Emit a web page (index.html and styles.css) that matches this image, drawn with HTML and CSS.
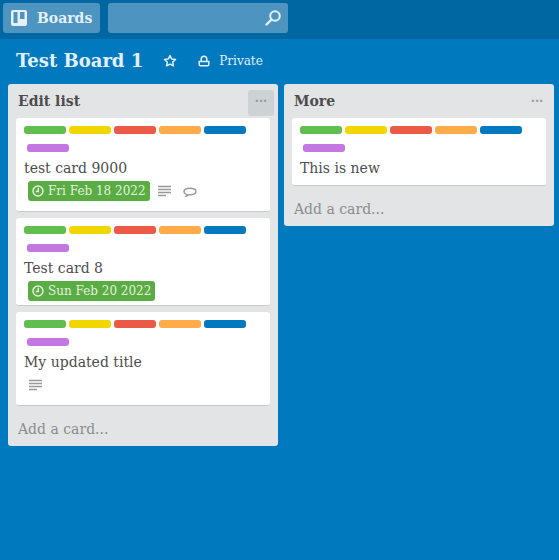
FILE: index.html
```html
<!DOCTYPE html>
<html>
<head>
    <title>Test Board 1</title>
    <link rel="stylesheet" href="styles.css">
</head>
<body>
    <header class="topbar">
        <a class="boards-btn">
            <svg class="boards-icon" width="16" height="16" viewBox="0 0 16 16">
                <path fill="#e4f0f6" fill-rule="evenodd" d="M2 0h12a2 2 0 0 1 2 2v12a2 2 0 0 1-2 2H2a2 2 0 0 1-2-2V2a2 2 0 0 1 2-2zM2.5 2v11h4V2zM9 2v7h4.500V2z"/>
            </svg>
            <span>Boards</span>
        </a>
        <div class="search">
            <svg width="16" height="16" viewBox="0 0 16 16">
                <circle cx="10" cy="6" r="4.800" fill="none" stroke="#e4f0f6" stroke-width="2"/>
                <path d="M6.500 9.500L1.500 14.500" stroke="#e4f0f6" stroke-width="2.400" stroke-linecap="round"/>
            </svg>
        </div>
    </header>

    <div class="board-header">
        <h1>Test Board 1</h1>
        <svg class="star" width="14" height="14" viewBox="0 0 14 14">
            <path fill="none" stroke="#e4f0f6" stroke-width="1.500" stroke-linejoin="round" d="M7 1.500l1.700 3.500 3.800.5-2.800 2.600.7 3.800L7 10.100l-3.400 1.800.7-3.800L1.500 5.500l3.800-.5z"/>
        </svg>
        <svg class="lock" width="12" height="12" viewBox="0 0 12 12">
            <path fill="none" stroke="#e4f0f6" stroke-width="1.500" d="M1.200 6.500h9.600v3.200a1 1 0 0 1-1 1H2.200a1 1 0 0 1-1-1zM3.200 6.500V4a2.800 2.800 0 0 1 5.600 0v2.500"/>
        </svg>
        <span class="privacy">Private</span>
    </div>

    <main class="board">
        <section class="list">
            <div class="list-header">
                <h2>Edit list</h2>
                <span class="list-menu active">...</span>
            </div>
            <div class="card">
                <div class="labels">
                    <span class="label green"></span><span class="label yellow"></span><span class="label red"></span><span class="label orange"></span><span class="label blue"></span><span class="label purple"></span>
                </div>
                <p class="card-title">test card 9000</p>
                <div class="badges">
                    <span class="due">
                        <svg width="12" height="12" viewBox="0 0 12 12"><circle cx="6" cy="6" r="5" fill="none" stroke="#e4f0dc" stroke-width="1.500"/><path d="M6.300 2.800v3.700H3.800" fill="none" stroke="#e4f0dc" stroke-width="1.400"/></svg>
                        Fri Feb 18 2022
                    </span>
                    <svg class="desc-icon" width="13" height="12" viewBox="0 0 13 12"><path d="M0 1.500h13M0 4.500h13M0 7.500h13M0 10.500h8" stroke="#999" stroke-width="1.500"/></svg>
                    <svg class="comment-icon" width="14" height="12" viewBox="0 0 14 12"><path fill="none" stroke="#999" stroke-width="1.400" d="M4 8.600C2.200 8.100 1 7 1 5.600 1 3.500 3.500 2.200 7 2.200s6 1.300 6 3.400-2.500 3.100-5.500 3.100c-.6 0-1.200 0-1.700-.1-.7.800-1.500 1.300-2.600 1.500.5-.5.800-1 .8-1.500z"/></svg>
                </div>
            </div>
            <div class="card clipped">
                <div class="labels">
                    <span class="label green"></span><span class="label yellow"></span><span class="label red"></span><span class="label orange"></span><span class="label blue"></span><span class="label purple"></span>
                </div>
                <p class="card-title">Test card 8</p>
                <div class="badges">
                    <span class="due">
                        <svg width="12" height="12" viewBox="0 0 12 12"><circle cx="6" cy="6" r="5" fill="none" stroke="#e4f0dc" stroke-width="1.500"/><path d="M6.300 2.800v3.700H3.800" fill="none" stroke="#e4f0dc" stroke-width="1.400"/></svg>
                        Sun Feb 20 2022
                    </span>
                </div>
            </div>
            <div class="card">
                <div class="labels">
                    <span class="label green"></span><span class="label yellow"></span><span class="label red"></span><span class="label orange"></span><span class="label blue"></span><span class="label purple"></span>
                </div>
                <p class="card-title">My updated title</p>
                <div class="badges">
                    <svg class="desc-icon only" width="13" height="12" viewBox="0 0 13 12"><path d="M0 1.500h13M0 4.500h13M0 7.500h13M0 10.500h8" stroke="#999" stroke-width="1.500"/></svg>
                </div>
            </div>
            <a class="add-card">Add a card...</a>
        </section>

        <section class="list">
            <div class="list-header">
                <h2>More</h2>
                <span class="list-menu">...</span>
            </div>
            <div class="card short">
                <div class="labels">
                    <span class="label green"></span><span class="label yellow"></span><span class="label red"></span><span class="label orange"></span><span class="label blue"></span><span class="label purple"></span>
                </div>
                <p class="card-title">This is new</p>
            </div>
            <a class="add-card">Add a card...</a>
        </section>
    </main>
</body>
</html>
```

FILE: styles.css
```css
body {
    font-family: "DejaVu Serif", serif;
    background-color: #0079bf;
    color: #4d4d4d;
    margin: 0;
    padding: 0;
    height: 560px;
    overflow: hidden;
}

.topbar {
    background-color: #0067a3;
    height: 39px;
    padding: 3px 0 0 3px;
    box-sizing: border-box;
    display: flex;
    align-items: flex-start;
    gap: 8px;
}

.boards-btn {
    background-color: #4d95c0;
    width: 97px;
    height: 30px;
    border-radius: 3px;
    display: flex;
    align-items: center;
    padding-left: 8px;
    box-sizing: border-box;
    color: #e4f0f6;
    font-size: 14px;
    font-weight: bold;
}

.boards-icon {
    margin-right: 10px;
}

.search {
    background-color: #4d95c0;
    width: 180px;
    height: 30px;
    border-radius: 3px;
    display: flex;
    align-items: center;
    justify-content: flex-end;
    padding-right: 7px;
    box-sizing: border-box;
}

.board-header {
    height: 43px;
    padding-left: 16px;
    margin-bottom: 2px;
    display: flex;
    align-items: center;
    color: #e4f0f6;
}

.board-header h1 {
    margin: 0;
    font-size: 18px;
    font-weight: bold;
}

.star {
    margin-left: 20px;
}

.lock {
    margin-left: 21px;
}

.privacy {
    font-size: 12px;
    margin-left: 9px;
}

.board {
    display: flex;
    align-items: flex-start;
    gap: 6px;
    padding-left: 8px;
}

.list {
    width: 270px;
    background-color: #e2e4e6;
    border-radius: 3px;
    padding: 0 8px;
    box-sizing: border-box;
}

.list-header {
    height: 34px;
    display: flex;
    align-items: center;
    justify-content: space-between;
    margin-right: -4px;
}

.list-header h2 {
    margin: 0 0 0 2px;
    font-size: 14px;
    font-weight: bold;
}

.list-menu {
    width: 26px;
    height: 26px;
    margin-top: 3px;
    border-radius: 3px;
    color: #999;
    font-size: 12px;
    font-weight: bold;
    text-align: center;
    line-height: 16px;
}

.list-menu.active {
    background-color: #cdd2d4;
}

.card {
    background-color: #fff;
    border-radius: 3px;
    border-bottom: 1px solid #c4c9cc;
    height: 94px;
    padding: 8px;
    box-sizing: border-box;
    margin-bottom: 6px;
}

.card.clipped {
    height: 88px;
    overflow: hidden;
}

.card.short {
    height: 68px;
}

.labels {
    display: flex;
    flex-wrap: wrap;
    gap: 10px 3px;
    width: 230px;
}

.label {
    width: 42px;
    height: 8px;
    border-radius: 3px;
}

.green { background-color: #61bd4f; }
.yellow { background-color: #f2d600; }
.red { background-color: #eb5a46; }
.orange { background-color: #ffab4a; }
.blue { background-color: #0079bf; }
.purple { background-color: #c377e0; margin-left: 3px; }

.card-title {
    margin: 6px 0 0;
    font-size: 14px;
    line-height: 20px;
}

.badges {
    display: flex;
    align-items: center;
    padding-left: 4px;
    margin-top: 3px;
}

.due {
    background-color: #5aac44;
    color: #e4f0dc;
    border-radius: 3px;
    height: 20px;
    padding: 0 4px;
    display: flex;
    align-items: center;
    gap: 4px;
    font-size: 12px;
    white-space: nowrap;
}

.desc-icon {
    margin-left: 8px;
}

.desc-icon.only {
    margin: 4px 0 0 1px;
}

.comment-icon {
    margin: 1px 0 0 12px;
}

.add-card {
    display: block;
    color: #8c8c8c;
    font-size: 14px;
    height: 34px;
    line-height: 34px;
    margin-left: 2px;
}
```
